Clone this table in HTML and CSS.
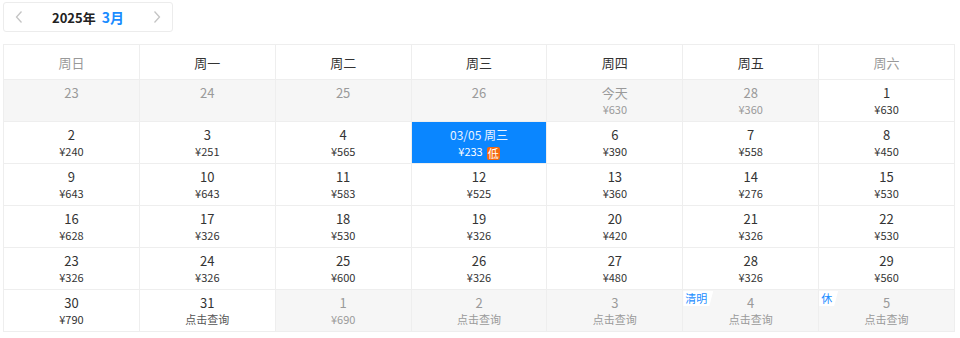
FILE: index.html
```html
<!DOCTYPE html>
<html lang="zh">
<head>
<meta charset="utf-8">
<link rel="stylesheet" href="styles.css">
</head>
<body>
<div class="nav">
  <span class="arrow"><svg width="10" height="14" viewBox="0 0 10 14"><path d="M7.5 1.5 L2.5 7 L7.5 12.5" fill="none" stroke="#c4c4c4" stroke-width="1.3"/></svg></span>
  <span class="title"><span class="year">2025年</span><span class="month">3月</span></span>
  <span class="arrow"><svg width="10" height="14" viewBox="0 0 10 14"><path d="M2.5 1.5 L7.5 7 L2.5 12.5" fill="none" stroke="#c4c4c4" stroke-width="1.3"/></svg></span>
</div>
<div class="cal">
  <div class="hd weekend">周日</div><div class="hd">周一</div><div class="hd">周二</div><div class="hd">周三</div><div class="hd">周四</div><div class="hd">周五</div><div class="hd weekend">周六</div>

  <div class="c off"><div class="d">23</div></div>
  <div class="c off"><div class="d">24</div></div>
  <div class="c off"><div class="d">25</div></div>
  <div class="c off"><div class="d">26</div></div>
  <div class="c off"><div class="d">今天</div><div class="p">¥630</div></div>
  <div class="c off"><div class="d">28</div><div class="p">¥360</div></div>
  <div class="c"><div class="d">1</div><div class="p">¥630</div></div>

  <div class="c"><div class="d">2</div><div class="p">¥240</div></div>
  <div class="c"><div class="d">3</div><div class="p">¥251</div></div>
  <div class="c"><div class="d">4</div><div class="p">¥565</div></div>
  <div class="c sel"><div class="d">03/05 周三</div><div class="p">¥233<span class="low">低</span></div></div>
  <div class="c"><div class="d">6</div><div class="p">¥390</div></div>
  <div class="c"><div class="d">7</div><div class="p">¥558</div></div>
  <div class="c"><div class="d">8</div><div class="p">¥450</div></div>

  <div class="c"><div class="d">9</div><div class="p">¥643</div></div>
  <div class="c"><div class="d">10</div><div class="p">¥643</div></div>
  <div class="c"><div class="d">11</div><div class="p">¥583</div></div>
  <div class="c"><div class="d">12</div><div class="p">¥525</div></div>
  <div class="c"><div class="d">13</div><div class="p">¥360</div></div>
  <div class="c"><div class="d">14</div><div class="p">¥276</div></div>
  <div class="c"><div class="d">15</div><div class="p">¥530</div></div>

  <div class="c"><div class="d">16</div><div class="p">¥628</div></div>
  <div class="c"><div class="d">17</div><div class="p">¥326</div></div>
  <div class="c"><div class="d">18</div><div class="p">¥530</div></div>
  <div class="c"><div class="d">19</div><div class="p">¥326</div></div>
  <div class="c"><div class="d">20</div><div class="p">¥420</div></div>
  <div class="c"><div class="d">21</div><div class="p">¥326</div></div>
  <div class="c"><div class="d">22</div><div class="p">¥530</div></div>

  <div class="c"><div class="d">23</div><div class="p">¥326</div></div>
  <div class="c"><div class="d">24</div><div class="p">¥326</div></div>
  <div class="c"><div class="d">25</div><div class="p">¥600</div></div>
  <div class="c"><div class="d">26</div><div class="p">¥326</div></div>
  <div class="c"><div class="d">27</div><div class="p">¥480</div></div>
  <div class="c"><div class="d">28</div><div class="p">¥326</div></div>
  <div class="c"><div class="d">29</div><div class="p">¥560</div></div>

  <div class="c"><div class="d">30</div><div class="p">¥790</div></div>
  <div class="c"><div class="d">31</div><div class="p q">点击查询</div></div>
  <div class="c off"><div class="d">1</div><div class="p">¥690</div></div>
  <div class="c off"><div class="d">2</div><div class="p">点击查询</div></div>
  <div class="c off"><div class="d">3</div><div class="p">点击查询</div></div>
  <div class="c off"><span class="tag">清明</span><div class="d">4</div><div class="p">点击查询</div></div>
  <div class="c off"><span class="tag">休</span><div class="d">5</div><div class="p">点击查询</div></div>
</div>
</body>
</html>
```
FILE: styles.css
```css
* { box-sizing: border-box; }
html, body { margin: 0; background: #fff; }
body {
  padding: 2px 5px 0 3px;
  font-family: "Noto Sans CJK SC", "Noto Sans", sans-serif;
  color: #333;
}
.nav {
  width: 170px;
  height: 30px;
  border: 1px solid #ececec;
  border-radius: 3px;
  display: flex;
  align-items: center;
  justify-content: space-between;
  padding: 0 10px 0 10px;
}
.arrow { display: flex; align-items: center; }
.title { display: flex; align-items: baseline; gap: 6px; font-weight: 700; }
.year { font-size: 13px; color: #222; }
.month { font-size: 14px; color: #1a8cff; }
.cal {
  margin-top: 12px;
  width: 952px;
  display: grid;
  grid-template-columns: repeat(7, 1fr);
  border-top: 1px solid #eee;
  border-left: 1px solid #eee;
}
.hd {
  height: 35px;
  display: flex;
  align-items: center;
  justify-content: center;
  font-size: 13px;
  color: #333;
  border-right: 1px solid #eee;
  border-bottom: 1px solid #eee;
}
.hd.weekend { color: #999; }
.c {
  position: relative;
  height: 42px;
  padding-top: 5px;
  text-align: center;
  border-right: 1px solid #eee;
  border-bottom: 1px solid #eee;
  background: #fff;
}
.d { font-size: 13px; line-height: 16px; color: #333; }
.p { font-size: 11px; line-height: 16px; color: #333; }
.p.q { color: #555; }
.c.off { background: #f6f6f6; }
.c.off .d, .c.off .p { color: #9a9a9a; }
.c.sel { background: #0a86ff; }
.c.sel .d { color: #eaf3ff; font-size: 12px; }
.c.sel .p { color: #fff; font-size: 11px; }
.low {
  display: inline-block;
  margin-left: 4px;
  background: #f56a0f;
  color: #fff;
  font-size: 11px;
  line-height: 13px;
  width: 13px;
  height: 13px;
  border-radius: 2px;
  text-align: center;
  vertical-align: -2px;
}
.tag {
  position: absolute;
  left: 0;
  top: 1px;
  height: 15px;
  padding: 0 6px 0 2px;
  background: #fff;
  color: #1a8cff;
  font-size: 11px;
  line-height: 15px;
  clip-path: polygon(0 0, 100% 0, calc(100% - 4px) 100%, 0 100%);
}
```
